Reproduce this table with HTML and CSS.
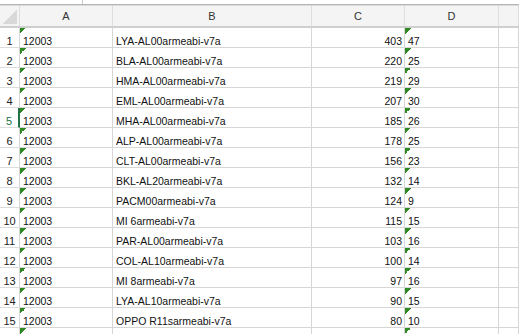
FILE: index.html
```html
<!DOCTYPE html>
<html>
<head>
<meta charset="utf-8">
<link rel="stylesheet" href="styles.css">
</head>
<body>
<div class="sheet">
  <div class="topbar"><div class="tdiv"></div></div>
  <div class="rule1"></div>
  <div class="rule2"></div>
  <div class="row head">
    <div class="c rh corner"><span class="ctri"></span></div>
    <div class="c hc">A</div>
    <div class="c hc">B</div>
    <div class="c hc">C</div>
    <div class="c hc">D</div>
    <div class="c hc e"></div>
  </div>
  <div class="row"><div class="c rh">1</div><div class="c a"><i class="tri"></i>12003</div><div class="c b">LYA-AL00armeabi-v7a</div><div class="c n">403</div><div class="c d"><i class="tri"></i>47</div><div class="c e"></div></div>
  <div class="row"><div class="c rh">2</div><div class="c a"><i class="tri"></i>12003</div><div class="c b">BLA-AL00armeabi-v7a</div><div class="c n">220</div><div class="c d"><i class="tri"></i>25</div><div class="c e"></div></div>
  <div class="row"><div class="c rh">3</div><div class="c a"><i class="tri"></i>12003</div><div class="c b">HMA-AL00armeabi-v7a</div><div class="c n">219</div><div class="c d"><i class="tri"></i>29</div><div class="c e"></div></div>
  <div class="row"><div class="c rh">4</div><div class="c a"><i class="tri"></i>12003</div><div class="c b">EML-AL00armeabi-v7a</div><div class="c n">207</div><div class="c d"><i class="tri"></i>30</div><div class="c e"></div></div>
  <div class="row"><div class="c rh active">5</div><div class="c a"><i class="tri"></i>12003</div><div class="c b">MHA-AL00armeabi-v7a</div><div class="c n">185</div><div class="c d"><i class="tri"></i>26</div><div class="c e"></div></div>
  <div class="row"><div class="c rh">6</div><div class="c a"><i class="tri"></i>12003</div><div class="c b">ALP-AL00armeabi-v7a</div><div class="c n">178</div><div class="c d"><i class="tri"></i>25</div><div class="c e"></div></div>
  <div class="row"><div class="c rh">7</div><div class="c a"><i class="tri"></i>12003</div><div class="c b">CLT-AL00armeabi-v7a</div><div class="c n">156</div><div class="c d"><i class="tri"></i>23</div><div class="c e"></div></div>
  <div class="row"><div class="c rh">8</div><div class="c a"><i class="tri"></i>12003</div><div class="c b">BKL-AL20armeabi-v7a</div><div class="c n">132</div><div class="c d"><i class="tri"></i>14</div><div class="c e"></div></div>
  <div class="row"><div class="c rh">9</div><div class="c a"><i class="tri"></i>12003</div><div class="c b">PACM00armeabi-v7a</div><div class="c n">124</div><div class="c d"><i class="tri"></i>9</div><div class="c e"></div></div>
  <div class="row"><div class="c rh">10</div><div class="c a"><i class="tri"></i>12003</div><div class="c b">MI 6armeabi-v7a</div><div class="c n">115</div><div class="c d"><i class="tri"></i>15</div><div class="c e"></div></div>
  <div class="row"><div class="c rh">11</div><div class="c a"><i class="tri"></i>12003</div><div class="c b">PAR-AL00armeabi-v7a</div><div class="c n">103</div><div class="c d"><i class="tri"></i>16</div><div class="c e"></div></div>
  <div class="row"><div class="c rh">12</div><div class="c a"><i class="tri"></i>12003</div><div class="c b">COL-AL10armeabi-v7a</div><div class="c n">100</div><div class="c d"><i class="tri"></i>14</div><div class="c e"></div></div>
  <div class="row"><div class="c rh">13</div><div class="c a"><i class="tri"></i>12003</div><div class="c b">MI 8armeabi-v7a</div><div class="c n">97</div><div class="c d"><i class="tri"></i>16</div><div class="c e"></div></div>
  <div class="row"><div class="c rh">14</div><div class="c a"><i class="tri"></i>12003</div><div class="c b">LYA-AL10armeabi-v7a</div><div class="c n">90</div><div class="c d"><i class="tri"></i>15</div><div class="c e"></div></div>
  <div class="row"><div class="c rh">15</div><div class="c a"><i class="tri"></i>12003</div><div class="c b">OPPO R11sarmeabi-v7a</div><div class="c n">80</div><div class="c d"><i class="tri"></i>10</div><div class="c e"></div></div>
  <div class="row"><div class="c rh"></div><div class="c a"><i class="tri"></i></div><div class="c b"></div><div class="c n"></div><div class="c d"><i class="tri"></i></div><div class="c e"></div></div>
</div>
</body>
</html>
```

FILE: styles.css
```css
html, body {
  margin: 0;
  padding: 0;
  background: #fff;
  overflow: hidden;
}
.sheet {
  width: 519px;
  height: 334px;
  overflow: hidden;
  font-family: "Liberation Sans", Arial, sans-serif;
  font-size: 10.5px;
  color: #111;
}
.topbar {
  height: 4px;
  display: flex;
}
.tdiv {
  margin-left: 82px;
  width: 1px;
  background: #c8c8c8;
}
.rule1 { height: 1px; background: #b4b4b4; }
.rule2 { height: 1px; background: #dcdcdc; }
.row {
  display: grid;
  grid-template-columns: 20px 93px 199px 93px 94px 1fr;
  height: 20px;
  box-sizing: border-box;
}
.row.head {
  height: 22px;
  background: #f4f4f4;
  border-bottom: 2px solid #cfcfcf;
}
.c {
  position: relative;
  box-sizing: border-box;
  border-right: 1px solid #d6d6d6;
  border-bottom: 1px solid #d6d6d6;
  display: flex;
  align-items: flex-end;
  line-height: 12px;
  padding-bottom: 0;
  white-space: nowrap;
  overflow: hidden;
}
.head .c {
  border-bottom: none;
  border-right-color: #dedede;
  align-items: center;
  justify-content: center;
  padding-bottom: 0;
  font-size: 11px;
  color: #333;
}
.corner { justify-content: flex-start; }
.ctri {
  position: absolute;
  left: 3px;
  top: 3px;
  width: 14px;
  height: 15px;
  background: linear-gradient(to bottom right, transparent 50%, #d9d9d9 50%);
}
.rh {
  justify-content: center;
  font-size: 11px;
  color: #222;
  border-bottom-color: #dcdcdc;
}
.rh.active {
  color: #217346;
  border-right: 2px solid #217346;
}
.a { padding-left: 3px; }
.b { padding-left: 3px; }
.n { justify-content: flex-end; padding-right: 2px; }
.d { padding-left: 3px; }
.tri {
  position: absolute;
  left: 0;
  top: 0;
  width: 6px;
  height: 6px;
  background: linear-gradient(to bottom right, #2f8a23 50%, transparent 50%);
}
```
